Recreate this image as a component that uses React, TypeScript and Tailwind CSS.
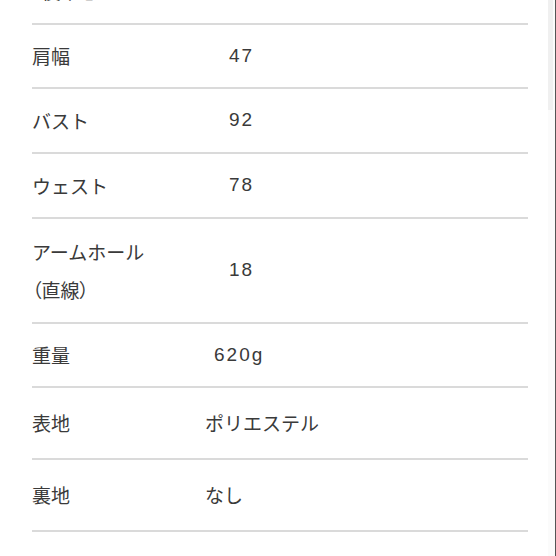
const font = "font-['Noto_Sans_CJK_JP','Noto_Sans',sans-serif]";
const digits = "font-['Liberation_Sans','Noto_Sans_CJK_JP',sans-serif] tracking-[2px]";

type Row = {
  label: string[];
  value: string;
  height: string;
  valueClass?: string;
};

// sizes are the measured spacing between the rules in the screenshot
const rows: Row[] = [
  { label: ["着丈", "（後中心）"], value: "66", height: "h-[105px]", valueClass: `pl-[24px] ${digits}` },
  { label: ["肩幅"], value: "47", height: "h-[64px]", valueClass: `pl-[24px] ${digits}` },
  { label: ["バスト"], value: "92", height: "h-[65px]", valueClass: `pl-[24px] ${digits}` },
  { label: ["ウェスト"], value: "78", height: "h-[65px]", valueClass: `pl-[24px] ${digits}` },
  { label: ["アームホール", "（直線）"], value: "18", height: "h-[105px]", valueClass: `pl-[24px] ${digits}` },
  { label: ["重量"], value: "620g", height: "h-[64px]", valueClass: `pl-[9px] ${digits}` },
  { label: ["表地"], value: "ポリエステル", height: "h-[72px]" },
  { label: ["裏地"], value: "なし", height: "h-[72px]" },
  { label: ["ポケット"], value: "あり", height: "h-[72px]" },
];

function SpecRow({ row }: { row: Row }) {
  return (
    <div
      className={`grid ${row.height} grid-cols-[173px_1fr] items-center border-b-2 border-[#dadada]`}
    >
      <div className="leading-[38px]">
        {row.label.map((line) => (
          <div
            key={line}
            className={line.startsWith("（") ? "[font-feature-settings:'palt']" : ""}
          >
            {line}
          </div>
        ))}
      </div>
      <div className={row.valueClass}>{row.value}</div>
    </div>
  );
}

export default function App() {
  return (
    <div className={`flex h-[556px] w-[556px] overflow-hidden bg-white ${font}`}>
      <div className="flex-1 overflow-hidden">
        <div className="-mt-[80px] ml-[32px] w-[496px] text-[19px] text-[#3a3a3a]">
          {rows.map((row) => (
            <SpecRow key={row.label[0]} row={row} />
          ))}
        </div>
      </div>
      {/* scrollbar + window edge */}
      <div className="w-[7px] bg-[#fbfbfb]">
        <div className="h-[110px] w-[5px] bg-[#f0f0f0]" />
      </div>
      <div className="w-px bg-[#555]" />
    </div>
  );
}
